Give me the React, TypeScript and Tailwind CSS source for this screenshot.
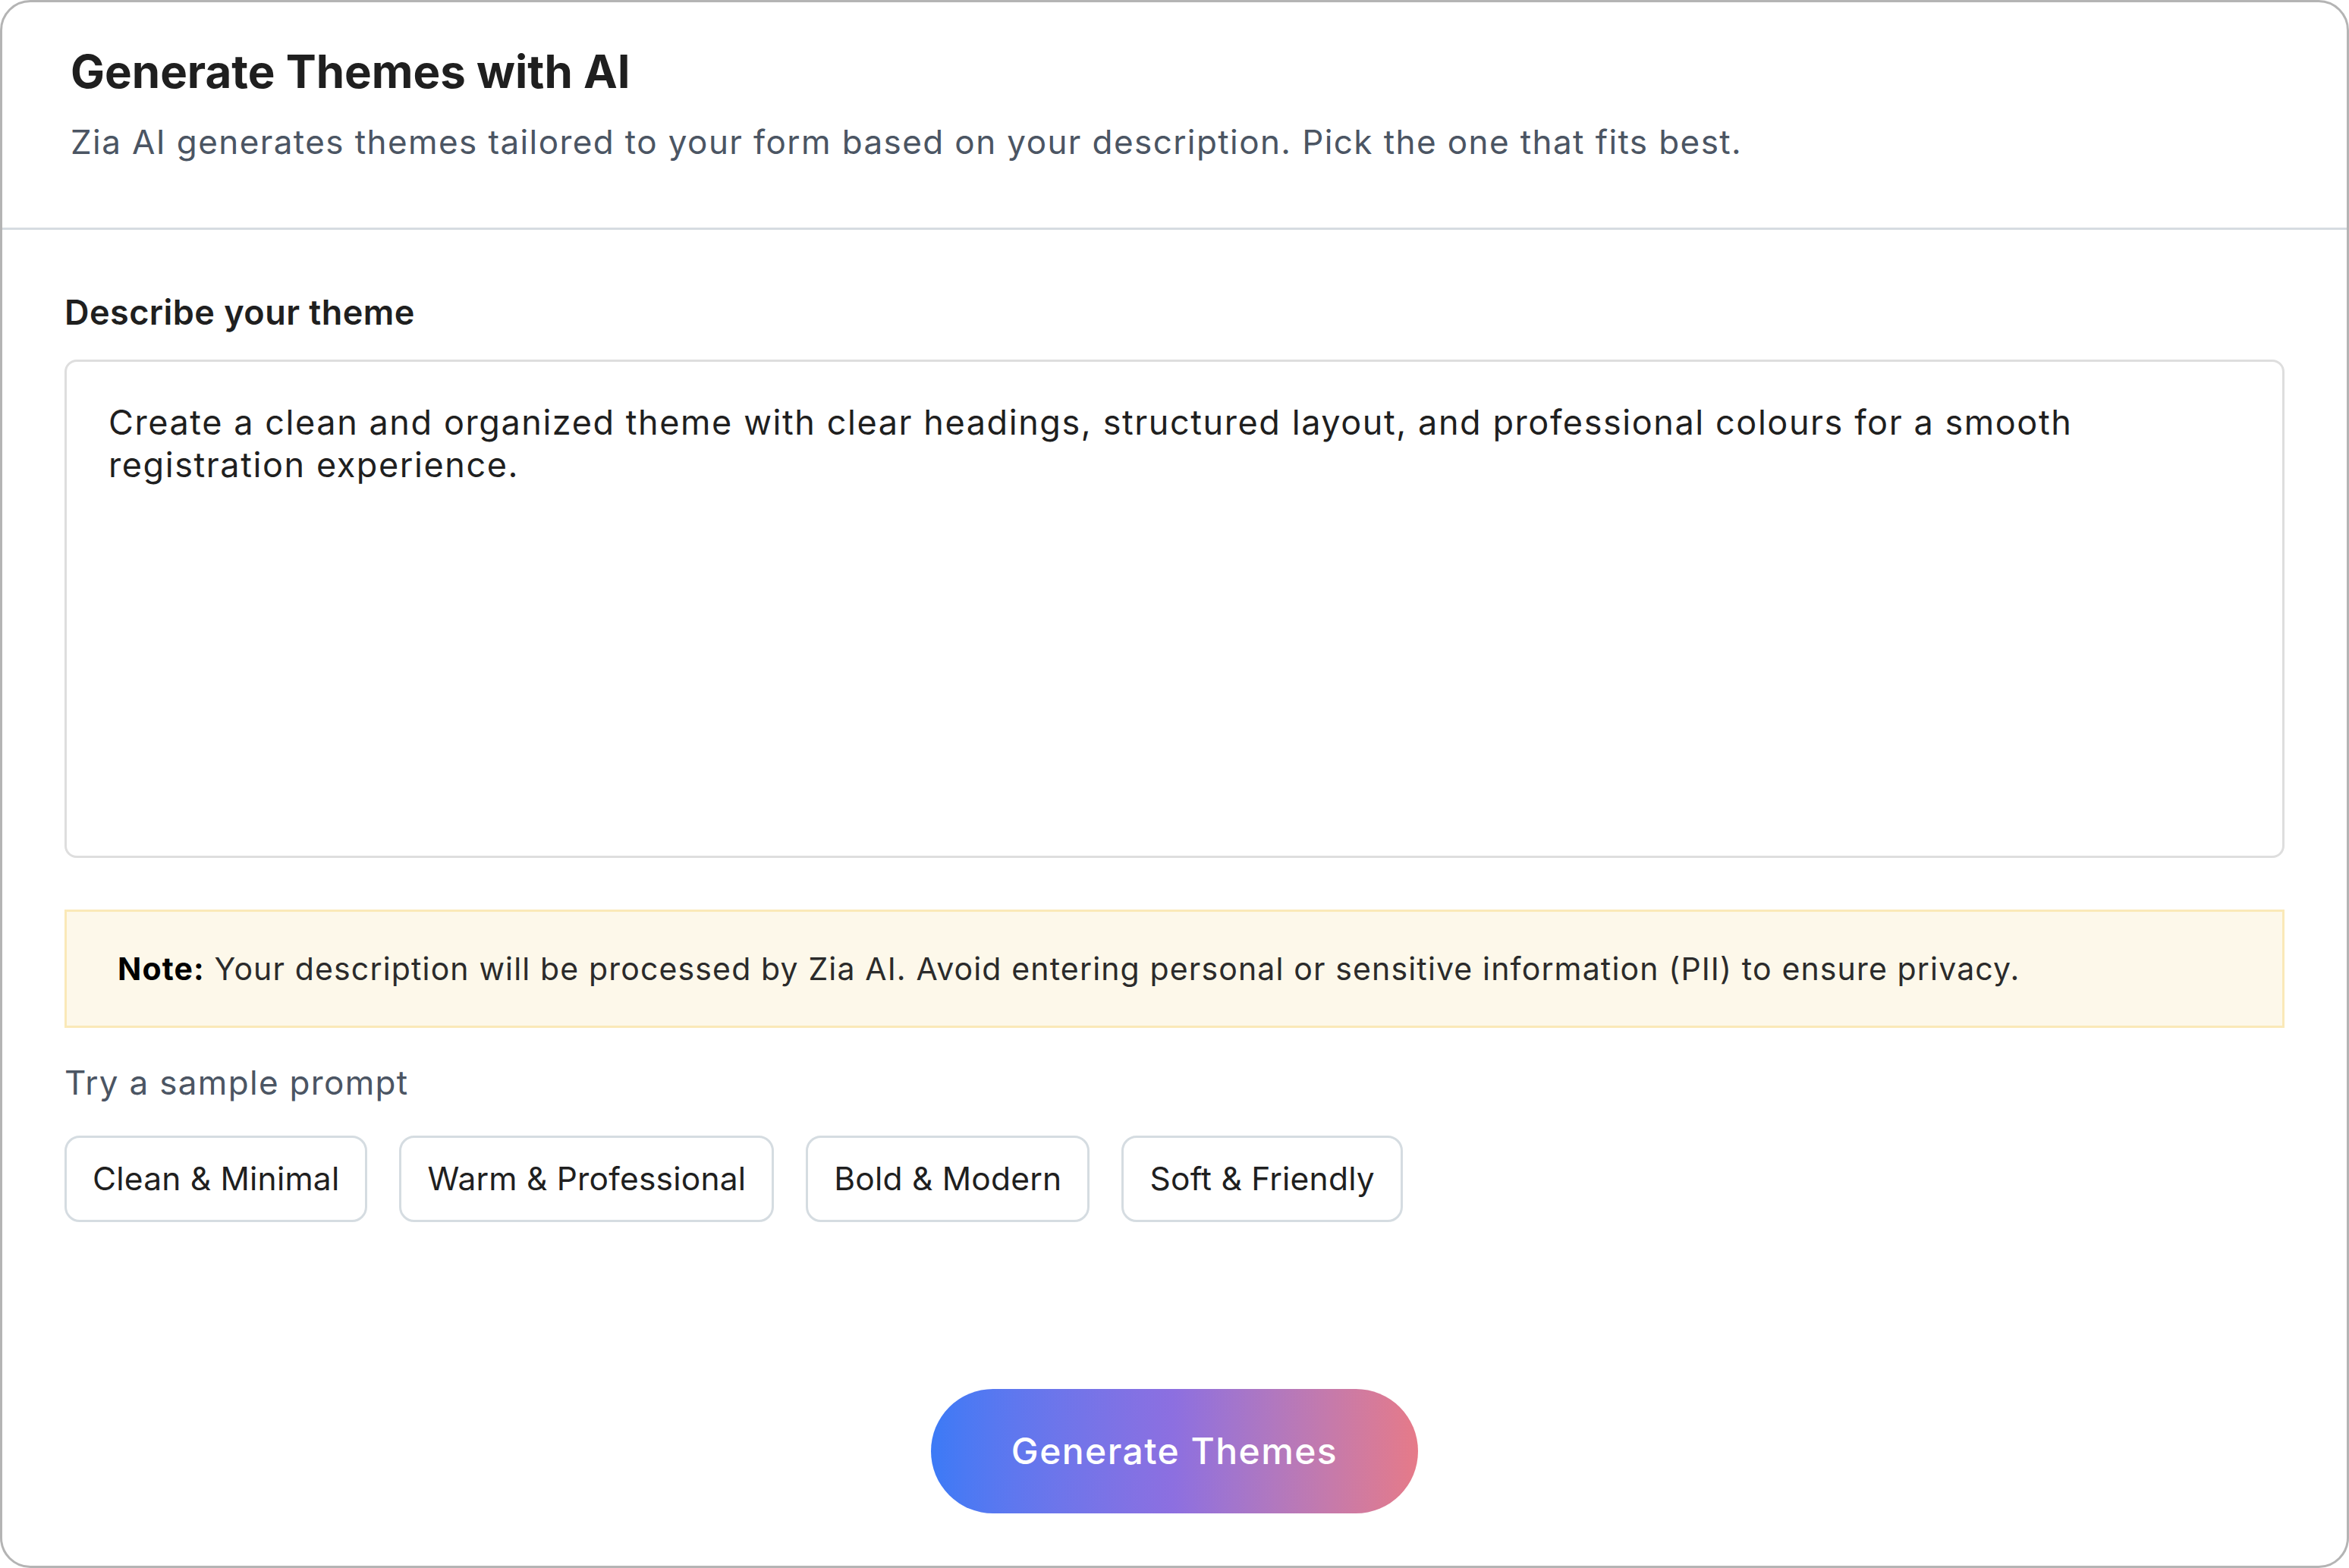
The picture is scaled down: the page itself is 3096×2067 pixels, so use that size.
import { useState } from 'react';

const samplePrompts = [
  'Clean & Minimal',
  'Warm & Professional',
  'Bold & Modern',
  'Soft & Friendly',
];

const defaultPrompt =
  'Create a clean and organized theme with clear headings, structured layout, and professional colours for a smooth registration experience.';

const App = () => {
  const [prompt, setPrompt] = useState(defaultPrompt);

  return (
    <div
      className="h-[2067px] w-[3096px] bg-white"
      style={{ fontFamily: 'Inter, "Noto Sans", sans-serif' }}
    >
      <div className="flex h-full w-full flex-col overflow-hidden rounded-[40px] border-[3px] border-[#b4b4b4] bg-white">
        {/* Header */}
        <div className="border-b-[3px] border-[#d6dce1] px-[90px] pb-[87px] pt-[53px]">
          <h1 className="text-[60px] font-bold leading-[76px] text-[#1f1f1f]">
            Generate Themes with AI
          </h1>
          <p className="mt-[29px] text-[44px] leading-[52px] tracking-[0.032em] text-[#4b5563]">
            Zia AI generates themes tailored to your form based on your description. Pick the one
            that fits best.
          </p>
        </div>

        {/* Body */}
        <div className="flex flex-1 flex-col px-[82px] pt-[82px]">
          <label className="text-[45px] font-semibold leading-[54px] tracking-[0.01em] text-[#1f1f1f]">
            Describe your theme
          </label>
          <textarea
            value={prompt}
            onChange={(e) => setPrompt(e.target.value)}
            className="mt-[35px] h-[657px] w-full resize-none rounded-[16px] border-[3px] border-[#dedede] bg-white px-[55px] pt-[52px] text-[45px] leading-[56px] tracking-[0.035em] text-[#1f1f1f] outline-none"
          />

          <div className="mt-[68px] flex h-[156px] items-center border-[3px] border-[#fae9b8] bg-[#fdf8ea] px-[67px] text-[41px] leading-[48px] tracking-[0.028em] text-[#2b2b2b]">
            <p>
              <span className="font-bold text-black">Note:</span> Your description will be
              processed by Zia AI. Avoid entering personal or sensitive information (PII) to ensure
              privacy.
            </p>
          </div>

          <p className="mt-[46px] text-[44px] leading-[52px] tracking-[0.03em] text-[#4b5563]">
            Try a sample prompt
          </p>

          <div className="mt-[44px] flex gap-[42px]">
            {samplePrompts.map((item) => (
              <button
                key={item}
                type="button"
                onClick={() => setPrompt(item)}
                className="h-[114px] rounded-[20px] border-[3px] border-[#d5dce1] bg-white px-[34px] text-[42.5px] tracking-[0.005em] text-[#1f1f1f]"
              >
                {item}
              </button>
            ))}
          </div>

          <div className="mt-[220px] flex justify-center">
            <button
              type="button"
              className="h-[164px] w-[642px] rounded-full bg-gradient-to-r from-[#3b7af6] via-[#8d6fe0] to-[#e67a88] text-[48px] font-medium tracking-[0.03em] text-white"
            >
              Generate Themes
            </button>
          </div>
        </div>
      </div>
    </div>
  );
};

export default App;
